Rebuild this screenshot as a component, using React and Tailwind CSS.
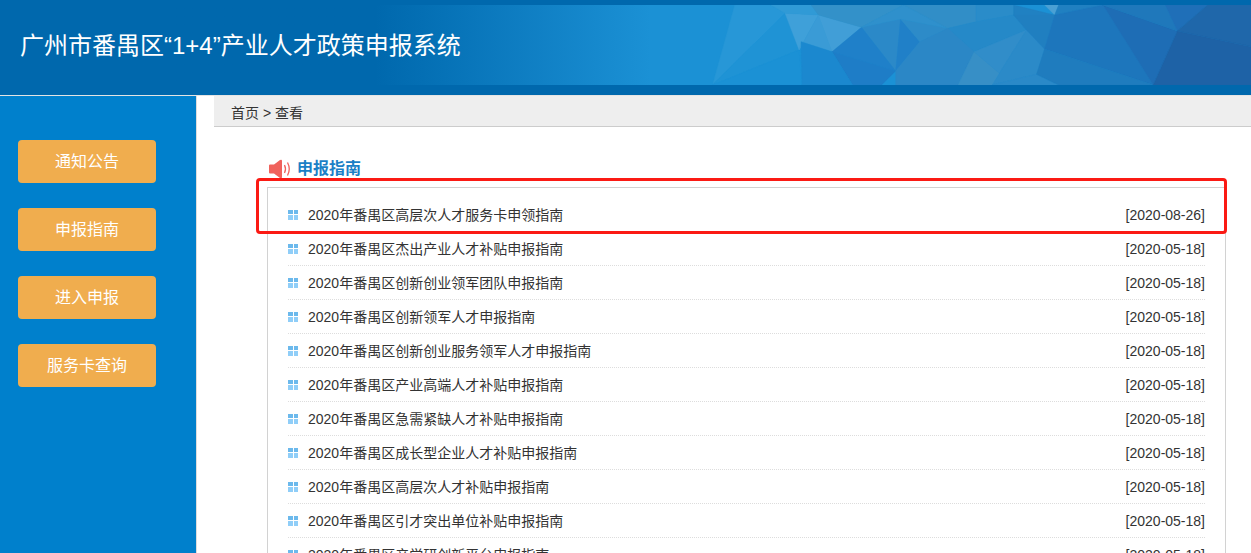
const navItems = ["通知公告", "申报指南", "进入申报", "服务卡查询"];

const rows = [
  ["2020年番禺区高层次人才服务卡申领指南", "[2020-08-26]"],
  ["2020年番禺区杰出产业人才补贴申报指南", "[2020-05-18]"],
  ["2020年番禺区创新创业领军团队申报指南", "[2020-05-18]"],
  ["2020年番禺区创新领军人才申报指南", "[2020-05-18]"],
  ["2020年番禺区创新创业服务领军人才申报指南", "[2020-05-18]"],
  ["2020年番禺区产业高端人才补贴申报指南", "[2020-05-18]"],
  ["2020年番禺区急需紧缺人才补贴申报指南", "[2020-05-18]"],
  ["2020年番禺区成长型企业人才补贴申报指南", "[2020-05-18]"],
  ["2020年番禺区高层次人才补贴申报指南", "[2020-05-18]"],
  ["2020年番禺区引才突出单位补贴申报指南", "[2020-05-18]"],
  ["2020年番禺区产学研创新平台申报指南", "[2020-05-18]"],
];

// low-poly facets of the header banner
const facets = [
  ["285,0 375,0 410,25 230,240", "#2797d7"],
  ["410,25 445,135 230,240", "#1f93d5"],
  ["445,135 452,240 230,240", "#1b91d5"],
  ["410,25 493,30 445,135", "#3fa0d9"],
  ["493,30 527,140 450,110 445,135", "#3a9bd6"],
  ["493,30 600,67 527,140", "#419ed7"],
  ["375,0 475,0 493,30 410,25", "#309ad6"],
  ["475,0 705,0 600,67 493,30", "#3391c9"],
  ["600,67 697,42 685,198", "#2b89c8"],
  ["527,140 600,67 685,198", "#1f80c9"],
  ["527,140 685,198 650,240 578,240", "#1e7dc7"],
  ["450,110 527,140 578,240 452,240", "#1b88cf"],
  ["697,42 745,110 685,198", "#2080c8"],
  ["697,42 815,70 745,110", "#2d8bc8"],
  ["705,0 815,70 697,42 600,67", "#2f90cc"],
  ["705,0 885,0 885,50 815,70", "#318ec7"],
  ["885,0 978,0 978,30 885,50", "#2a8cc9"],
  ["815,70 885,50 978,30 1010,75 880,140", "#2589c8"],
  ["745,110 815,70 880,140 840,240 685,240 685,198", "#2b87c6"],
  ["880,140 943,205 925,240 840,240", "#378fc6"],
  ["880,140 1010,75 943,205", "#318dc9"],
  ["1010,75 1055,132 1035,208 925,240 943,205", "#2b8ac8"],
  ["1035,208 1090,240 925,240", "#2a89c8"],
  ["978,0 1080,30 978,30", "#2081c2"],
  ["978,30 1080,30 1055,132 1010,75", "#207fc0"],
  ["1055,0 1090,0 1080,30", "#4aa0d4"],
  ["1090,0 1200,0 1080,30", "#2080c1"],
  ["1080,30 1200,0 1325,240 1055,132", "#1d76bc"],
  ["1055,132 1325,240 1090,240 1035,208", "#1f7cbe"],
  ["1200,0 1385,78 1325,240", "#1e6db5"],
  ["1200,0 1355,0 1385,78", "#1f78bb"],
  ["1355,0 1460,0 1385,78", "#1f6fb8"],
  ["1460,0 1568,0 1568,125 1385,78", "#1f67aa"],
  ["1385,78 1568,125 1568,240 1325,240", "#1e62a6"],
];

function Banner() {
  return (
    <svg
      className="absolute left-[620px] top-[5px] w-[631px] h-[80px]"
      viewBox="0 0 1568 240"
      preserveAspectRatio="none"
    >
      {facets.map(([points, fill]) => (
        <polygon key={points} points={points} fill={fill} stroke={fill} strokeWidth="1" />
      ))}
    </svg>
  );
}

function Speaker() {
  return (
    <svg width="24" height="20" viewBox="0 0 24 20" className="shrink-0">
      <path d="M1 6.5 Q1 5.5 2 5.5 H6 L12 1 Q14 0 14 2 V18 Q14 20 12 19 L6 14.5 H2 Q1 14.5 1 13.5 Z" fill="#f0625c" />
      <path d="M16.5 6 Q18.5 10 16.5 14" fill="none" stroke="#f0625c" strokeWidth="1.3" />
      <path d="M19.5 3.5 Q23 10 19.5 16.5" fill="none" stroke="#f0625c" strokeWidth="1.3" />
    </svg>
  );
}

function Bullet() {
  return (
    <span className="grid grid-cols-2 gap-px w-[10px] h-[10px] shrink-0">
      <span className="bg-[#6cb9ec]" />
      <span className="bg-[#6cb9ec]" />
      <span className="bg-[#90cef8]" />
      <span className="bg-[#90cef8]" />
    </span>
  );
}

export default function App() {
  return (
    <div
      className="relative h-screen overflow-hidden bg-white flex flex-col"
      style={{ fontFamily: '"Liberation Sans", "Noto Sans CJK SC", sans-serif' }}
    >
      <header className="relative h-[95px] shrink-0 bg-[#0068ad] overflow-hidden">
        <div className="absolute left-0 right-0 top-[5px] h-[80px] bg-gradient-to-r from-[#0068ad] from-[30%] to-[#1b91d5] to-[52%]" />
        <Banner />
        <h1 className="relative pl-5 pt-[29px] text-2xl leading-[34px] font-normal text-white">
          广州市番禺区“1+4”产业人才政策申报系统
        </h1>
      </header>

      <div className="flex flex-1 min-h-0 border-t border-[#e4e4e4]">
        <aside className="w-[197px] shrink-0 bg-[#0080cc] border-r border-[#ddd] pt-[44px] pl-[18px] flex flex-col gap-[25px]">
          {navItems.map((item) => (
            <button
              key={item}
              className="w-[138px] h-[43px] rounded bg-[#f0ad4e] text-white text-base"
            >
              {item}
            </button>
          ))}
        </aside>

        <main className="flex-1 min-w-0 pl-[17px]">
          <div className="h-[31px] bg-[#eee] border-b border-[#ccc] pl-[17px] text-sm leading-[34px] text-[#333]">
            首页 &gt; 查看
          </div>

          <div className="pl-[53px] pr-[25px]">
            <div className="ml-[1px] mt-[30px] h-[24px] flex items-center gap-[5px] -translate-x-[-0px]">
              <Speaker />
              <span className="text-base font-bold text-[#1b7fc6]">申报指南</span>
            </div>

            <div className="mt-[6px] border border-[#d2d2d2] pt-[10px] px-[20px]">
              {rows.map(([title, date]) => (
                <div
                  key={title}
                  className="h-[34px] flex items-center border-b border-dotted border-[#ddd] text-sm text-[#333]"
                >
                  <Bullet />
                  <span className="ml-[10px] flex-1">{title}</span>
                  <span>{date}</span>
                </div>
              ))}
            </div>
          </div>
        </main>
      </div>

      <div className="absolute left-[256px] top-[178px] w-[971px] h-[56px] border-[3px] border-[#fb1a14] rounded" />
    </div>
  );
}
